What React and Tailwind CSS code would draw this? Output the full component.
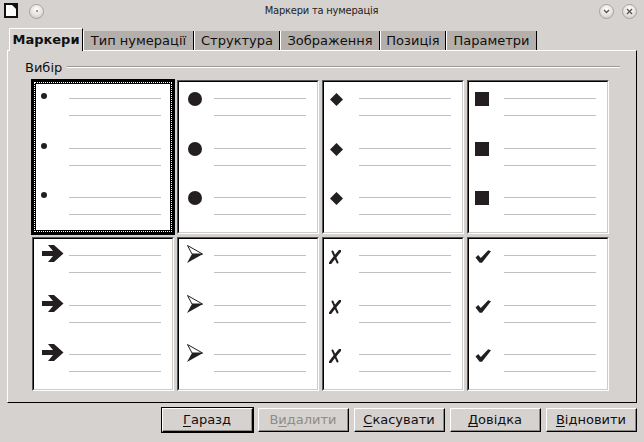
import React from 'react';

// Sunken preview bullets, drawn to match the dialog's picture glyphs
const INK = '#231f20';

function SmallDot() {
  return <div className="w-[6px] h-[6px] rounded-full bg-[#231f20]" />;
}

function BigDot() {
  return <div className="w-[14px] h-[14px] rounded-full bg-[#231f20]" />;
}

function Diamond() {
  return (
    <svg width="13" height="13" viewBox="0 0 13 13">
      <polygon points="6.5,0 13,6.5 6.5,13 0,6.5" fill={INK} />
    </svg>
  );
}

function Square() {
  return <div className="w-[14px] h-[14px] bg-[#231f20]" />;
}

function HeavyArrow() {
  return (
    <svg width="22" height="19" viewBox="0 0 22 19">
      <polygon points="0,7 11,7 6,1 12,1 21.5,9.5 12,18 6,18 11,12 0,12" fill={INK} />
    </svg>
  );
}

function Arrowhead() {
  return (
    <svg width="16" height="18" viewBox="0 0 16 18">
      <polygon points="0.5,0.5 15.5,9 5,9" fill="#fff" stroke={INK} strokeWidth="1" strokeLinejoin="round" />
      <polygon points="5,9 16,9 0,18" fill={INK} />
    </svg>
  );
}

function Cross() {
  return (
    <svg width="12" height="14" viewBox="0 0 12 14">
      <path d="M3.5 1.5 C5 4.5 6.5 8.5 8.5 12.5" stroke={INK} strokeWidth="2" fill="none" strokeLinecap="round" />
      <path d="M11 1 C8 4.5 4.5 8.5 1.3 13" stroke={INK} strokeWidth="2.8" fill="none" strokeLinecap="round" />
    </svg>
  );
}

function Check() {
  return (
    <svg width="16" height="13" viewBox="0 0 16 13">
      <path d="M0.5 7.5 L3.2 5 L5.8 8 L13.2 0.3 L16 1.3 L7 12.8 L4.6 12.8 Z" fill={INK} />
    </svg>
  );
}

const rows1 = [
  { Icon: SmallDot, pl: 'pl-[5px]', mt: 'mt-[-5px]' },
  { Icon: BigDot, pl: 'pl-[9px]', mt: 'mt-[-6px]' },
  { Icon: Diamond, pl: 'pl-[6px]', mt: 'mt-[-5px]' },
  { Icon: Square, pl: 'pl-[6px]', mt: 'mt-[-6px]' },
];

const rows2 = [
  { Icon: HeavyArrow, pl: 'pl-[8px]', mt: 'mt-[-11px]' },
  { Icon: Arrowhead, pl: 'pl-[8px]', mt: 'mt-[-10px]' },
  { Icon: Cross, pl: 'pl-[5px]', mt: 'mt-[-5px]' },
  { Icon: Check, pl: 'pl-[6px]', mt: 'mt-[-5px]' },
];

function Lines({ bullet, col }) {
  const { Icon, pl, mt } = bullet;
  return (
    <div className="flex flex-col">
      {[0, 1, 2].map((i) => (
        <div key={i} className={`flex ${i === 1 ? 'h-[49px]' : 'h-[50px]'}`}>
          <div className={`${col} ${pl} shrink-0`}>
            <div className={mt}>
              <Icon />
            </div>
          </div>
          <div className="w-[92px] flex flex-col">
            <div className="h-px bg-[#c0c0c0]" />
            <div className="h-px bg-[#c0c0c0] mt-[16px]" />
          </div>
        </div>
      ))}
    </div>
  );
}

function Cell({ bullet, selected }) {
  if (selected) {
    return (
      <div className="w-[144px] h-[156px] -m-px border-[3px] border-black bg-black">
        <div className="h-full border border-dotted border-white bg-black">
          <div className="h-full border border-black bg-white pt-[14px] overflow-hidden">
            <Lines bullet={bullet} col="w-[33px]" />
          </div>
        </div>
      </div>
    );
  }
  return (
    <div className="w-[142px] h-[154px] border border-t-[#555] border-l-[#555] border-r-white border-b-white">
      <div className="h-full border border-t-black border-l-black border-r-[#cfcbc7] border-b-[#cfcbc7] bg-white pt-[16px] overflow-hidden">
        <Lines bullet={bullet} col="w-[35px]" />
      </div>
    </div>
  );
}

function TitleButton({ children }) {
  return (
    <div className="w-[15px] h-[15px] rounded-full border border-[#a7a3a0] bg-[radial-gradient(circle_at_50%_35%,#ffffff,#e4e1df_55%,#c2bebb)] flex items-center justify-center">
      {children}
    </div>
  );
}

function Button({ label, mn, disabled }) {
  const idx = mn ?? 0;
  return (
    <div className="w-[91px] h-[24px] border border-t-white border-l-white border-r-black border-b-black">
      <div
        className={`h-full flex items-center justify-center border-r border-b border-[#8e8a86] text-[13px] ${
          disabled ? 'text-[#8f8b88]' : 'text-[#101010]'
        }`}
      >
        <span>
          {label.slice(0, idx)}
          <span className="underline underline-offset-2">{label[idx]}</span>
          {label.slice(idx + 1)}
        </span>
      </div>
    </div>
  );
}

const tabs = [
  { name: 'Тип нумерації', w: 'w-[111px]' },
  { name: 'Структура', w: 'w-[86px]' },
  { name: 'Зображення', w: 'w-[100px]' },
  { name: 'Позиція', w: 'w-[66px]' },
  { name: 'Параметри', w: 'w-[91px]' },
];

export default function App() {
  return (
    <div className="w-[644px] h-[442px] bg-[#d6d2cf] flex flex-col overflow-hidden font-['DejaVu_Sans',sans-serif] text-[#101010]">
      {/* Title bar */}
      <div className="h-[22px] flex items-center pl-[4px] pr-[7px]">
        <svg width="14" height="15" viewBox="0 0 14 15" className="mt-[-1px]">
          <path d="M1 1 H8.5 L13 5.5 V14 H1 Z" fill="#fff" stroke="#111" strokeWidth="2" />
          <path d="M8 0 H14 V6 Z" fill="#111" />
        </svg>
        <div className="ml-[11px]">
          <TitleButton>
            <div className="w-[2px] h-[2px] rounded-full bg-[#777]" />
          </TitleButton>
        </div>
        <div className="flex-1 text-center text-[11px] font-['DejaVu_Sans_Condensed','DejaVu_Sans',sans-serif] tracking-[-0.2px] text-[#222]">
          Маркери та нумерація
        </div>
        <div className="flex items-center gap-[8px]">
          <TitleButton>
            <svg width="7" height="5" viewBox="0 0 7 5">
              <path d="M1 1 L3.5 3.5 L6 1" stroke="#555" strokeWidth="1.3" fill="none" />
            </svg>
          </TitleButton>
          <TitleButton>
            <svg width="7" height="7" viewBox="0 0 7 7">
              <path d="M1 1 L6 6 M6 1 L1 6" stroke="#555" strokeWidth="1.3" />
            </svg>
          </TitleButton>
        </div>
      </div>

      {/* Tabs */}
      <div className="h-[28px] flex items-end pl-[9px]">
        <div className="relative z-10 w-[74px] h-[23px] -mb-px bg-[#d6d2cf] border-t border-l border-white border-r border-r-black flex items-center justify-center pb-[1px] font-bold text-[13px]">
          Маркери
        </div>
        {tabs.map((t) => (
          <div
            key={t.name}
            className={`${t.w} h-[19px] bg-[#b4afab] border-l border-white border-r border-r-black flex items-center justify-center text-[13px]`}
          >
            {t.name}
          </div>
        ))}
      </div>

      {/* Panel */}
      <div className="ml-[7px] w-[630px] h-[353px] border border-t-white border-l-white border-r-black border-b-black flex flex-col">
        <div className="mt-[8px] h-[16px] flex items-center pl-[17px] pr-[16px]">
          <span className="text-[13px] leading-none">Вибір</span>
          <div className="flex-1 ml-[5px] h-[2px] border-t border-[#9d9995] border-b border-b-white" />
        </div>
        <div className="mt-[5px] ml-[24px] grid grid-cols-[repeat(4,142px)] gap-[3px]">
          {rows1.map((b, i) => (
            <Cell key={'a' + i} bullet={b} selected={i === 0} />
          ))}
          {rows2.map((b, i) => (
            <Cell key={'b' + i} bullet={b} />
          ))}
        </div>
      </div>

      {/* Buttons */}
      <div className="flex justify-end items-start pt-[4px] pr-[7px]">
        <div className="w-[93px] h-[26px] border border-black mr-[4px]">
          <Button label="Гаразд" />
        </div>
        <div className="mt-[1px] flex gap-[5px]">
          <Button label="Видалити" mn={1} disabled />
          <Button label="Скасувати" />
          <Button label="Довідка" />
          <Button label="Відновити" />
        </div>
      </div>
    </div>
  );
}
